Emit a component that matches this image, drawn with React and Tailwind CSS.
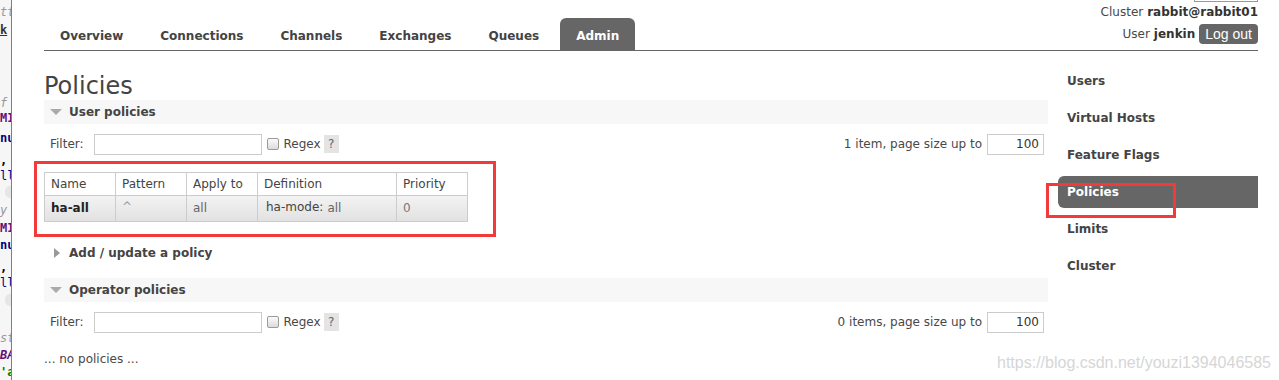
import clsx from 'clsx'

const TABS = ['Overview', 'Connections', 'Channels', 'Exchanges', 'Queues', 'Admin']
const SIDE_LINKS = ['Users', 'Virtual Hosts', 'Feature Flags', 'Policies', 'Limits', 'Cluster']

function SectionHeader({ title, open = true }) {
  return (
    <div className={clsx('flex h-[24px] items-center', open && 'bg-[#f7f7f7]')}>
      {open ? (
        <span className="ml-[6px] h-0 w-0 border-x-[6px] border-t-[6px] border-x-transparent border-t-[#aaa]" />
      ) : (
        <span className="ml-[10px] h-0 w-0 border-y-[5px] border-l-[6px] border-y-transparent border-l-[#999]" />
      )}
      <span className={clsx('font-bold text-[#444]', open ? 'ml-[7px]' : 'ml-[9px]')}>{title}</span>
    </div>
  )
}

function FilterRow({ count }) {
  return (
    <div className="flex h-[22px] items-center justify-between pr-[4px]">
      <div className="flex items-center">
        <span className="ml-[6px]">Filter:</span>
        <div className="ml-[10px] h-[21px] w-[168px] border border-[#ccc] bg-white" />
        <span className="ml-[5px] h-[12px] w-[12px] rounded-[2px] border border-[#9a9a9a] bg-linear-to-b from-[#fafafa] to-[#dcdcdc]" />
        <span className="ml-[5px]">Regex</span>
        <span className="ml-[3px] flex h-[18px] w-[15px] items-center justify-center bg-[#e4e4e4] text-[#666]">?</span>
      </div>
      <div className="flex items-center">
        <span>{count}, page size up to</span>
        <div className="ml-[5px] flex h-[21px] w-[57px] items-center justify-end border border-[#ccc] bg-white pr-[4px] text-[#333]">
          100
        </div>
      </div>
    </div>
  )
}

function CodeSliver() {
  return (
    <div className="w-[12px] shrink-0 overflow-hidden whitespace-nowrap border-r border-[#5b84c4] bg-[#f6f6f6] font-['DejaVu_Sans_Mono',monospace] text-[12px] leading-[14px]">
      <div className="mt-[5px] italic text-[#999]">tt</div>
      <div className="mt-[4px] font-bold text-[#333] underline">k</div>
      <div className="mt-[59px] italic text-[#999]">f</div>
      <div className="mt-[1px] font-bold text-[#660e7a]">MI</div>
      <div className="mt-[6px] font-bold text-[#000080]">nu</div>
      <div className="mt-[8px] font-bold text-[#000]">,</div>
      <div className="mt-[2px] text-[#000080]">ll</div>
      <div className="mt-[3px] ml-[5px] h-[12px] w-[10px] rounded-l-[5px] bg-[#e6e6e6]" />
      <div className="mt-[5px] italic text-[#999]">y</div>
      <div className="mt-[4px] font-bold text-[#660e7a]">MI</div>
      <div className="mt-[3px] font-bold text-[#000080]">nu</div>
      <div className="mt-[8px] font-bold text-[#000]">,</div>
      <div className="mt-[2px] text-[#000080]">ll</div>
      <div className="mt-[4px] ml-[5px] h-[12px] w-[10px] rounded-l-[5px] bg-[#e6e6e6]" />
      <div className="mt-[25px] italic text-[#999]">st</div>
      <div className="mt-[3px] font-bold italic text-[#660e7a]">BA</div>
      <div className="mt-[3px] font-bold text-[#008000]">'a</div>
    </div>
  )
}

export default function App() {
  return (
    <div className="relative flex h-[380px] w-[1279px] overflow-hidden bg-white font-['DejaVu_Sans',Verdana,sans-serif] text-[12px] text-[#484848]">
      <CodeSliver />

      <div className="ml-[32px] w-[1214px]">
        {/* Header */}
        <header className="flex h-[51px] items-end justify-between border-b border-[#666]">
          <nav className="flex gap-[5px]">
            {TABS.map((tab) => (
              <div
                key={tab}
                className={clsx(
                  'flex h-[32px] items-center rounded-t-[6px] px-4 pt-[4px] font-bold',
                  tab === 'Admin' ? 'bg-[#666] text-white' : 'text-[#444]'
                )}
              >
                {tab}
              </div>
            ))}
          </nav>
          <div className="flex h-[51px] flex-col items-end">
            <div className="h-[3px] w-[64px] border-x border-b border-[#999]" />
            <div className="flex h-[20px] items-center">
              Cluster <b className="ml-[4px] text-[#333]">rabbit@rabbit01</b>
            </div>
            <div className="mt-[2px] flex items-center">
              User <b className="ml-[4px] text-[#333]">jenkin</b>
              <span className="ml-[4px] flex h-[20px] items-center rounded-[4px] bg-[#666] px-[6px] font-['Liberation_Sans',Arial,sans-serif] text-[14px] text-white">
                Log out
              </span>
            </div>
          </div>
        </header>

        <div className="flex items-start">
          {/* Main */}
          <main className="mt-[21px] w-[1004px]">
            <h1 className="h-[28px] text-[24px] leading-[28px] text-[#444]">Policies</h1>
            <SectionHeader title="User policies" />
            <div className="mt-[9px]">
              <FilterRow count="1 item" />
            </div>
            <div className="relative mt-[17px] w-fit">
              <table className="w-[424px] table-fixed border-collapse">
                <colgroup>
                  <col className="w-[71px]" />
                  <col className="w-[71px]" />
                  <col className="w-[71px]" />
                  <col className="w-[139px]" />
                  <col className="w-[71px]" />
                </colgroup>
                <thead>
                  <tr className="h-[23px]">
                    {['Name', 'Pattern', 'Apply to', 'Definition', 'Priority'].map((h) => (
                      <th key={h} className="border border-[#ccc] px-[6px] text-left font-normal text-[#444]">
                        {h}
                      </th>
                    ))}
                  </tr>
                </thead>
                <tbody>
                  <tr className="h-[26px] bg-linear-to-b from-[#f3f3f3] to-[#e1e1e1]">
                    <td className="border border-[#ccc] px-[6px] pt-[3px] align-top font-bold text-[#222]">ha-all</td>
                    <td className="border border-[#ccc] px-[6px] pt-[2px] align-top text-[#999]">^</td>
                    <td className="border border-[#ccc] px-[6px] pt-[3px] align-top text-[#666]">all</td>
                    <td className="border border-[#ccc] pl-[8px] pt-[2px] align-top">
                      <span className="text-[#444]">ha-mode:</span>
                      <span className="relative top-[1px] ml-[4px] text-[#666]">all</span>
                    </td>
                    <td className="border border-[#ccc] px-[6px] pt-[3px] align-top text-[#777]">0</td>
                  </tr>
                </tbody>
              </table>
              <div className="pointer-events-none absolute -top-[11px] -left-[10px] -right-[28px] -bottom-[15px] border-[3px] border-[#f23a3a]" />
            </div>
            <div className="mt-[19px]">
              <SectionHeader title="Add / update a policy" open={false} />
            </div>
            <div className="mt-[13px]">
              <SectionHeader title="Operator policies" />
            </div>
            <div className="mt-[9px]">
              <FilterRow count="0 items" />
            </div>
            <p className="mt-[17px]">... no policies ...</p>
          </main>

          {/* Sidebar */}
          <aside className="mt-[14px] ml-[10px] w-[200px]">
            {SIDE_LINKS.map((item) => (
              <div
                key={item}
                className={clsx(
                  'relative mb-[5px] flex h-[32px] items-center rounded-l-[6px] pl-[9px] font-bold',
                  item === 'Policies' ? 'bg-[#666] text-white' : 'text-[#444]'
                )}
              >
                {item}
                {item === 'Policies' && (
                  <div className="pointer-events-none absolute top-[7px] -left-[12px] h-[35px] w-[130px] border-[3px] border-[#f23a3a]" />
                )}
              </div>
            ))}
          </aside>
        </div>
      </div>

      <div className="pointer-events-none absolute left-[997px] top-[351px] font-['Liberation_Sans',Arial,sans-serif] text-[16px] text-[#d6d6d6]">
        https://blog.csdn.net/youzi1394046585
      </div>
    </div>
  )
}
